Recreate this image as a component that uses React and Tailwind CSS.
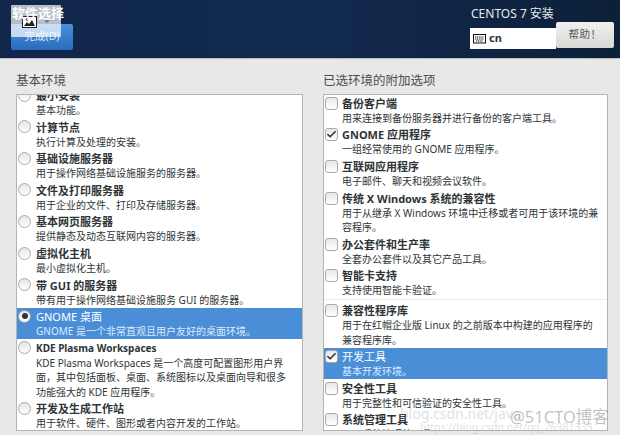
import React from 'react';
import { Check } from 'lucide-react';

const FONT = '"Noto Sans", "Noto Sans CJK SC", sans-serif';

const envs = [
  { title: '最小安装', desc: ['基本功能。'] },
  { title: '计算节点', desc: ['执行计算及处理的安装。'] },
  { title: '基础设施服务器', desc: ['用于操作网络基础设施服务的服务器。'] },
  { title: '文件及打印服务器', desc: ['用于企业的文件、打印及存储服务器。'] },
  { title: '基本网页服务器', desc: ['提供静态及动态互联网内容的服务器。'] },
  { title: '虚拟化主机', desc: ['最小虚拟化主机。'] },
  { title: '带 GUI 的服务器', desc: ['带有用于操作网络基础设施服务 GUI 的服务器。'] },
  { title: 'GNOME 桌面', desc: ['GNOME 是一个非常直观且用户友好的桌面环境。'], selected: true },
  {
    title: 'KDE Plasma Workspaces',
    latin: true,
    desc: ['KDE Plasma Workspaces 是一个高度可配置图形用户界', '面，其中包括面板、桌面、系统图标以及桌面向导和很多', '功能强大的 KDE 应用程序。'],
  },
  { title: '开发及生成工作站', desc: ['用于软件、硬件、图形或者内容开发的工作站。'] },
];

const addons = [
  { title: '备份客户端', desc: ['用来连接到备份服务器并进行备份的客户端工具。'] },
  { title: 'GNOME 应用程序', desc: ['一组经常使用的 GNOME 应用程序。'], checked: true },
  { title: '互联网应用程序', desc: ['电子邮件、聊天和视频会议软件。'] },
  { title: '传统 X Windows 系统的兼容性', desc: ['用于从继承 X Windows 环境中迁移或者可用于该环境的兼', '容程序。'] },
  { title: '办公套件和生产率', desc: ['全套办公套件以及其它产品工具。'] },
  { title: '智能卡支持', desc: ['支持使用智能卡验证。'], divider: true },
  { title: '兼容性程序库', desc: ['用于在红帽企业版 Linux 的之前版本中构建的应用程序的', '兼容程序库。'] },
  { title: '开发工具', desc: ['基本开发环境。'], checked: true, selected: true },
  { title: '安全性工具', desc: ['用于完整性和可信验证的安全性工具。'] },
  { title: '系统管理工具', desc: ['用于系统管理的工具。'] },
];

const Radio = ({ on }) => (
  <span className="mt-[2px] mr-[5px] w-[13px] h-[13px] shrink-0 rounded-full border border-[#a9a9a9] bg-gradient-to-b from-[#e4e4e4] to-white flex items-center justify-center">
    {on && <span className="w-[6px] h-[6px] rounded-full bg-[#2e3436]" />}
  </span>
);

const Checkbox = ({ on }) => (
  <span className="mt-[2.5px] mr-[4px] w-[13px] h-[13px] shrink-0 rounded-[3px] border border-[#a9a9a9] bg-gradient-to-b from-[#e8e8e8] to-white flex items-center justify-center">
    {on && <Check size={11} strokeWidth={3.5} className="text-[#2e3436]" />}
  </span>
);

const Row = ({ item, control }) => (
  <div className={`flex pl-[1px] ${item.selected ? 'bg-[#4a8ed8] text-white' : 'text-[#2e3436]'}`}>
    {control}
    <div className="min-w-0 pt-[1.5px] pb-[0.6px]">
      <div className={`leading-[15px] whitespace-nowrap ${item.latin ? 'text-[10px]' : 'text-[11px]'} ${item.selected ? 'font-normal' : 'font-bold'}`}>{item.title}</div>
      {item.desc.map((line) => (
        <div key={line} className={`text-[10px] leading-[14.5px] whitespace-nowrap ${item.selected ? 'text-[#dcebfa]' : ''}`}>{line}</div>
      ))}
    </div>
  </div>
);

export default function App() {
  return (
    <div className="relative w-[620px] h-[435px] overflow-hidden bg-[#e8e8e7] flex flex-col" style={{ fontFamily: FONT }}>
      {/* Header */}
      <header className="h-[59px] shrink-0 bg-gradient-to-r from-[#10264a] via-[#122a50] to-[#0c2038] border-b border-[#b8bcc0] flex justify-between pl-[11px] pr-[6px]">
        <div className="pt-[22px]">
          <button className="w-[62px] h-[26px] rounded-[2px] bg-gradient-to-b from-[#4a90e0] to-[#2a6cbc] text-[#dbe8f6] text-[10.5px]">完成(D)</button>
        </div>
        <div className="pt-[5px] w-[144px]">
          <div className="text-[#e6e9ed] text-[12px] leading-[18px] pl-[1px] whitespace-nowrap">CENTOS 7 安装</div>
          <div className="flex items-start mt-[5px]">
            <div className="w-[86px] h-[21px] bg-white flex items-center gap-[3px] pl-[3px] text-[11px] font-bold text-[#2e3436]">
              <svg width="13" height="11" viewBox="0 0 13 11" fill="none" stroke="#111">
                <rect x="0.5" y="1.5" width="12" height="8.5" />
                <path d="M2 4h9M2 6h9M3 8h7" strokeDasharray="1.2 0.6" />
              </svg>
              cn
            </div>
            <button className="w-[58px] h-[26px] -mt-[6px] rounded-[2px] bg-gradient-to-b from-[#f0f0ef] to-[#d8d8d6] text-[#555] text-[10.5px] tracking-wider">帮助！</button>
          </div>
        </div>
      </header>

      {/* Columns */}
      <main className="flex-1 min-h-0 grid grid-cols-[287px_285px] gap-[20px] pl-[16px] pt-[14px] pb-[4px]">
        <section className="min-h-0 flex flex-col">
          <h2 className="text-[12.5px] leading-[16px] mb-[5px] text-[#4a4e50]">基本环境</h2>
          <div className="flex-1 min-h-0 overflow-hidden bg-white border border-[#b4b4b4]">
            <div className="-mt-[8.4px]">
              {envs.map((item) => (
                <Row key={item.title} item={item} control={<Radio on={item.selected} />} />
              ))}
            </div>
          </div>
        </section>
        <section className="min-h-0 flex flex-col">
          <h2 className="text-[12.5px] leading-[16px] mb-[5px] text-[#4a4e50]">已选环境的附加选项</h2>
          <div className="flex-1 min-h-0 overflow-hidden bg-white border border-[#b4b4b4]">
            <div className="-mt-[0.7px]">
              {addons.map((item) => (
                <React.Fragment key={item.title}>
                  <Row item={item} control={<Checkbox on={item.checked} />} />
                  {item.divider && <div className="h-[1px] mt-[1px] mb-[1.3px] bg-[#ececec]" />}
                </React.Fragment>
              ))}
            </div>
          </div>
        </section>
      </main>

      {/* Broken image placeholder over the title */}
      <div className="absolute left-[11px] top-[5px] w-[50px] h-[32px] bg-white/70 rounded-[1px]">
        <svg className="absolute left-[11px] top-[11px]" width="15" height="12" viewBox="0 0 15 12">
          <rect x="0.5" y="0.5" width="14" height="11" fill="#fff" stroke="#222" />
          <path d="M2 10l3-4 2 2 3-4 3 6z" fill="#222" />
          <circle cx="5" cy="3.5" r="1.2" fill="#222" />
        </svg>
        <span className="absolute left-[33px] top-[15px] w-0 h-0 border-x-[3px] border-x-transparent border-t-[3px] border-t-[#777]" />
      </div>
      <div className="absolute left-[12px] top-[5px] text-[13px] leading-[16px] font-bold text-white">软件选择</div>

      {/* Watermarks */}
      <div className="absolute left-[400px] top-[405px] text-[14px] leading-[18px] text-[#b0b0b0]/40 whitespace-nowrap">blog.csdn.net/java</div>
      <div className="absolute left-[420px] top-[420px] text-[10.5px] leading-[14px] text-[#b0b0b0]/40 whitespace-nowrap">https://blog.csdn.net/qq_26981333</div>
      <div className="absolute left-[510px] top-[407px] text-[16.5px] leading-[20px] text-[#999999]/60 whitespace-nowrap">@51CTO博客</div>
    </div>
  );
}
